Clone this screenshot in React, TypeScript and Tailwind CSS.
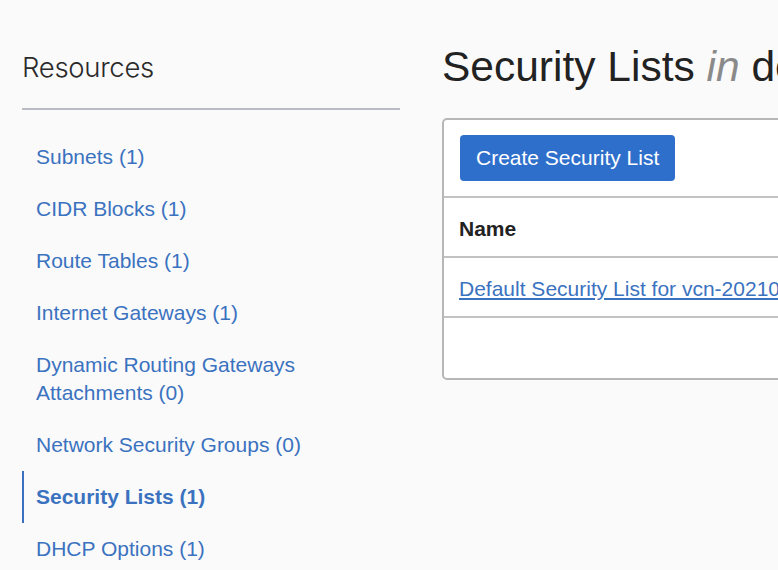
import React from 'react'

interface NavItem {
  label: string
  active?: boolean
}

const navItems: NavItem[] = [
  { label: 'Subnets (1)' },
  { label: 'CIDR Blocks (1)' },
  { label: 'Route Tables (1)' },
  { label: 'Internet Gateways (1)' },
  { label: 'Dynamic Routing Gateways Attachments (0)' },
  { label: 'Network Security Groups (0)' },
  { label: 'Security Lists (1)', active: true },
  { label: 'DHCP Options (1)' },
]

const Sidebar: React.FC = () => (
  <aside className="w-[378px] shrink-0">
    <h2 className="pt-[50px] pb-[24px] text-[27.5px] leading-[34px] font-light text-[#2a2a2a] font-['Inter',sans-serif] tracking-[-0.3px]">
      Resources
    </h2>
    <div className="h-[2px] bg-[#b9bcc3]" />
    <ul className="mt-[21px]">
      {navItems.map((item) => (
        <li
          key={item.label}
          className={`py-[12px] pl-[12px] pr-[70px] text-[21px] leading-[28px] text-[#3b72c0] border-l-2 ${
            item.active ? 'border-[#3b6fc0] font-bold' : 'border-transparent'
          }`}
        >
          <a href="#">{item.label}</a>
        </li>
      ))}
    </ul>
  </aside>
)

const SecurityListsPanel: React.FC = () => (
  <main className="ml-[42px] flex-1 overflow-hidden">
    <h1 className="pt-[40px] pb-[24px] text-[42.5px] leading-[54px] text-[#222] whitespace-nowrap">
      Security Lists <span className="italic text-[#8a8a8a]">in</span> default compartment
    </h1>
    <div className="w-[720px] border-2 border-[#b7b7b7] rounded-[5px] bg-white">
      <div className="px-[16px] pt-[15px] pb-[15px] border-b-2 border-[#c2c2c2]">
        <button className="h-[46px] px-[16px] rounded-[4px] bg-[#2f6fcc] text-white text-[21px]">
          Create Security List
        </button>
      </div>
      <div className="h-[60px] px-[15px] pt-[4px] flex items-center border-b-2 border-[#c2c2c2] text-[21px] font-bold text-[#222]">
        Name
      </div>
      <div className="h-[60px] px-[15px] pt-[4px] flex items-center border-b-2 border-[#c2c2c2] text-[21px] whitespace-nowrap">
        <a href="#" className="text-[#3b72c0] underline">
          Default Security List for vcn-20210915-1200
        </a>
      </div>
      <div className="h-[60px]" />
    </div>
  </main>
)

export default function App() {
  return (
    <div className="w-[778px] h-[570px] overflow-hidden bg-[#fafafa] font-['Liberation_Sans',Arial,sans-serif]">
      <div className="flex pl-[22px]">
        <Sidebar />
        <SecurityListsPanel />
      </div>
    </div>
  )
}
